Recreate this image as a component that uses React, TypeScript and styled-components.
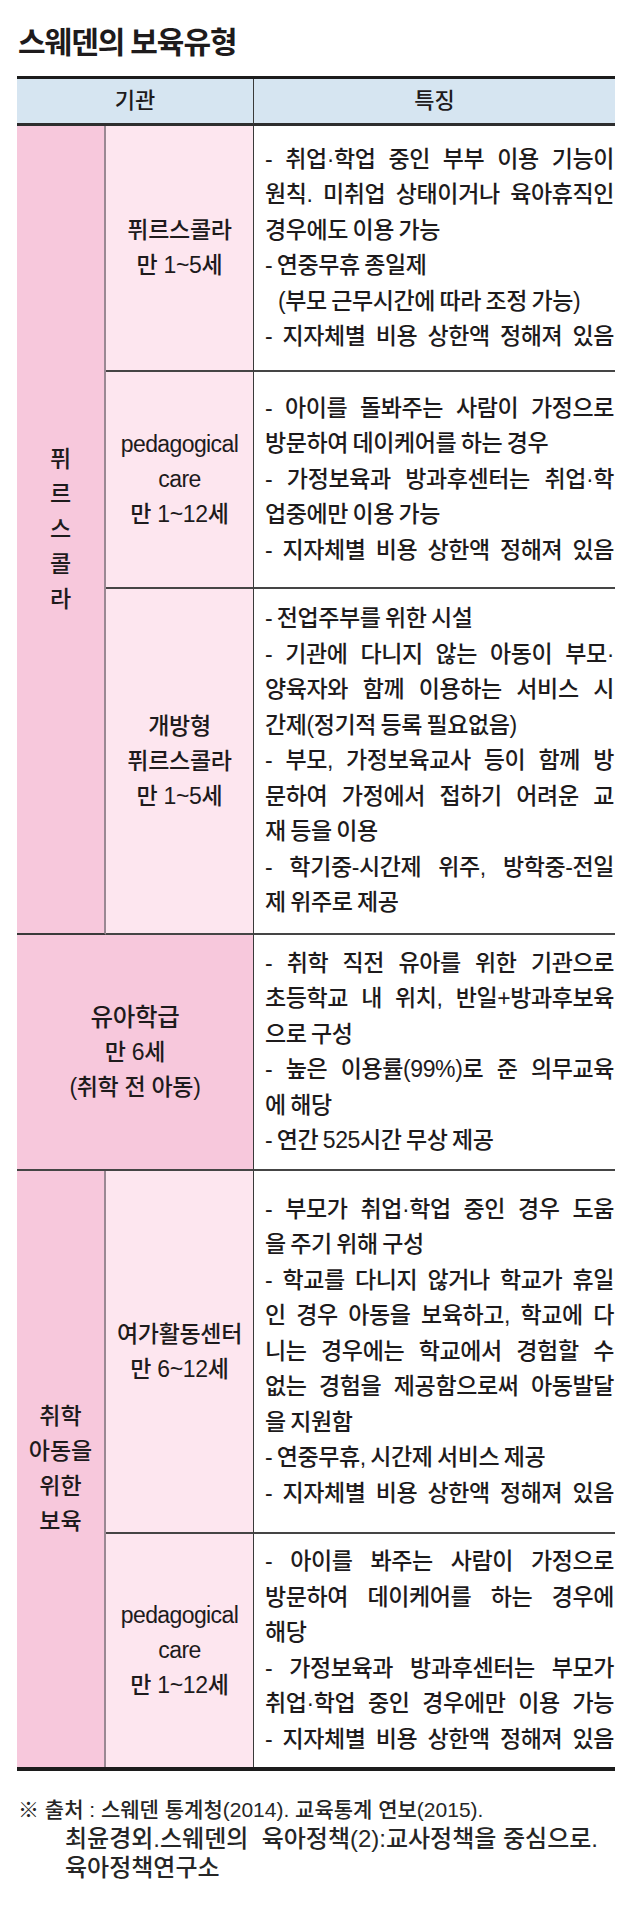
import React from "react";
import styled, { createGlobalStyle } from "styled-components";

type TextLine = { t: string; j?: boolean; indent?: boolean };
type NameLine = { t: string; latin?: boolean; big?: boolean };
type RowData = { row: number; wide?: boolean; last?: boolean; name: NameLine[]; desc: TextLine[] };

const J = (t: string): TextLine => ({ t, j: true });
const S = (t: string): TextLine => ({ t });

const GlobalStyle = createGlobalStyle`
  body {
    margin: 0;
    background: #fff;
  }
`;

const Page = styled.div`
  width: 640px;
  box-sizing: border-box;
  padding: 22px 0 40px 17px;
  font-family: "Liberation Sans", "Noto Sans CJK KR", sans-serif;
  font-weight: 500;
  color: #1e1b1c;
`;

const Title = styled.h1`
  margin: 0 0 18px 1px;
  font-family: "Noto Sans CJK KR", sans-serif;
  font-size: 30px;
  font-weight: 700;
  line-height: 36px;
  letter-spacing: -1px;
`;

const Table = styled.div`
  display: grid;
  width: 598px;
  grid-template-columns: 89px 148px 361px;
  grid-template-rows: 47px 246px 217px 346px 236px 363px 233px;
  border-top: 3px solid #1c1c1c;
  border-bottom: 4px solid #1c1c1c;
  font-size: 23px;
`;

const HeadCell = styled.div<{ $col: string; $divider?: boolean }>`
  grid-row: 1;
  grid-column: ${p => p.$col};
  box-sizing: border-box;
  display: flex;
  align-items: center;
  justify-content: center;
  background: #d6e5f1;
  border-bottom: 3px solid #2e2e2e;
  border-right: ${p => (p.$divider ? "1px solid #3a3a3a" : "none")};
  line-height: 30px;
  font-size: 22px;
`;

const GroupCell = styled.div<{ $row: string; $last?: boolean }>`
  grid-column: 1;
  grid-row: ${p => p.$row};
  box-sizing: border-box;
  display: flex;
  flex-direction: column;
  align-items: center;
  justify-content: center;
  background: #f7c8dc;
  border-right: 2px solid #9a8893;
  border-bottom: ${p => (p.$last ? "none" : "2px solid #3a3a3a")};
  line-height: 35px;
  text-align: center;
`;

const NameCell = styled.div<{ $row: number; $wide?: boolean; $last?: boolean }>`
  grid-column: ${p => (p.$wide ? "1 / 3" : "2")};
  grid-row: ${p => p.$row};
  box-sizing: border-box;
  display: flex;
  flex-direction: column;
  align-items: center;
  justify-content: center;
  background: ${p => (p.$wide ? "#f7c8dc" : "#fde6ef")};
  border-right: 1px solid #3a3a3a;
  border-bottom: ${p => (p.$last ? "none" : "2px solid #454545")};
  text-align: center;
`;

const Name = styled.div<{ $latin?: boolean; $big?: boolean }>`
  line-height: 35px;
  white-space: nowrap;
  font-size: ${p => (p.$big ? 24.5 : 23)}px;
  letter-spacing: ${p => (p.$latin ? "-0.6px" : "-0.3px")};
`;

const DescCell = styled.div<{ $row: number; $last?: boolean }>`
  grid-column: 3;
  grid-row: ${p => p.$row};
  box-sizing: border-box;
  display: flex;
  flex-direction: column;
  justify-content: center;
  padding: 0 1px 0 11px;
  border-bottom: ${p => (p.$last ? "none" : "2px solid #454545")};
  font-size: 23px;
  letter-spacing: -0.4px;
  word-spacing: -1.5px;
`;

const Line = styled.div<{ $justify?: boolean; $indent?: boolean }>`
  line-height: 35.5px;
  text-align: ${p => (p.$justify ? "justify" : "left")};
  text-align-last: ${p => (p.$justify ? "justify" : "left")};
  padding-left: ${p => (p.$indent ? 13 : 0)}px;
`;

const Footer = styled.div`
  margin-top: 24px;
  line-height: 29px;
  color: #262626;
`;

const FootLine = styled.div<{ $indent?: boolean }>`
  padding-left: ${p => (p.$indent ? 48 : 1)}px;
  font-size: ${p => (p.$indent ? 24 : 21)}px;
  white-space: nowrap;
`;

const rows: RowData[] = [
  {
    row: 2,
    name: [{ t: "퓌르스콜라" }, { t: "만 1~5세" }],
    desc: [
      J("- 취업·학업 중인 부부 이용 기능이"),
      J("원칙. 미취업 상태이거나 육아휴직인"),
      S("경우에도 이용 가능"),
      S("- 연중무휴 종일제"),
      { t: "(부모 근무시간에 따라 조정 가능)", indent: true },
      J("- 지자체별 비용 상한액 정해져 있음"),
    ],
  },
  {
    row: 3,
    name: [{ t: "pedagogical", latin: true }, { t: "care", latin: true }, { t: "만 1~12세" }],
    desc: [
      J("- 아이를 돌봐주는 사람이 가정으로"),
      S("방문하여 데이케어를 하는 경우"),
      J("- 가정보육과 방과후센터는 취업·학"),
      S("업중에만 이용 가능"),
      J("- 지자체별 비용 상한액 정해져 있음"),
    ],
  },
  {
    row: 4,
    name: [{ t: "개방형" }, { t: "퓌르스콜라" }, { t: "만 1~5세" }],
    desc: [
      S("- 전업주부를 위한 시설"),
      J("- 기관에 다니지 않는 아동이 부모·"),
      J("양육자와 함께 이용하는 서비스 시"),
      S("간제(정기적 등록 필요없음)"),
      J("- 부모, 가정보육교사 등이 함께 방"),
      J("문하여 가정에서 접하기 어려운 교"),
      S("재 등을 이용"),
      J("- 학기중-시간제 위주, 방학중-전일"),
      S("제 위주로 제공"),
    ],
  },
  {
    row: 5,
    wide: true,
    name: [{ t: "유아학급", big: true }, { t: "만 6세" }, { t: "(취학 전 아동)" }],
    desc: [
      J("- 취학 직전 유아를 위한 기관으로"),
      J("초등학교 내 위치, 반일+방과후보육"),
      S("으로 구성"),
      J("- 높은 이용률(99%)로 준 의무교육"),
      S("에 해당"),
      S("- 연간 525시간 무상 제공"),
    ],
  },
  {
    row: 6,
    name: [{ t: "여가활동센터" }, { t: "만 6~12세" }],
    desc: [
      J("- 부모가 취업·학업 중인 경우 도움"),
      S("을 주기 위해 구성"),
      J("- 학교를 다니지 않거나 학교가 휴일"),
      J("인 경우 아동을 보육하고, 학교에 다"),
      J("니는 경우에는 학교에서 경험할 수"),
      J("없는 경험을 제공함으로써 아동발달"),
      S("을 지원함"),
      S("- 연중무휴, 시간제 서비스 제공"),
      J("- 지자체별 비용 상한액 정해져 있음"),
    ],
  },
  {
    row: 7,
    last: true,
    name: [{ t: "pedagogical", latin: true }, { t: "care", latin: true }, { t: "만 1~12세" }],
    desc: [
      J("- 아이를 봐주는 사람이 가정으로"),
      J("방문하여 데이케어를 하는 경우에"),
      S("해당"),
      J("- 가정보육과 방과후센터는 부모가"),
      J("취업·학업 중인 경우에만 이용 가능"),
      J("- 지자체별 비용 상한액 정해져 있음"),
    ],
  },
];

const App: React.FC = () => {
  return (
    <Page>
      <GlobalStyle />
      <Title>스웨덴의 보육유형</Title>
      <Table>
        <HeadCell $col="1 / 3" $divider>기관</HeadCell>
        <HeadCell $col="3">특징</HeadCell>

        <GroupCell $row="2 / 5">
          {["퓌", "르", "스", "콜", "라"].map(c => (
            <div key={c}>{c}</div>
          ))}
        </GroupCell>
        <GroupCell $row="6 / 8" $last>
          {["취학", "아동을", "위한", "보육"].map(c => (
            <div key={c}>{c}</div>
          ))}
        </GroupCell>

        {rows.map(r => (
          <React.Fragment key={r.row}>
            <NameCell $row={r.row} $wide={r.wide} $last={r.last}>
              {r.name.map((n, i) => (
                <Name key={i} $latin={n.latin} $big={n.big}>{n.t}</Name>
              ))}
            </NameCell>
            <DescCell $row={r.row} $last={r.last}>
              {r.desc.map((l, i) => (
                <Line key={i} $justify={l.j} $indent={l.indent}>{l.t}</Line>
              ))}
            </DescCell>
          </React.Fragment>
        ))}
      </Table>
      <Footer>
        <FootLine>※ 출처 : 스웨덴 통계청(2014). 교육통계 연보(2015).</FootLine>
        <FootLine $indent>최윤경외.스웨덴의&nbsp; 육아정책(2):교사정책을 중심으로.</FootLine>
        <FootLine $indent>육아정책연구소</FootLine>
      </Footer>
    </Page>
  );
};

export default App;
